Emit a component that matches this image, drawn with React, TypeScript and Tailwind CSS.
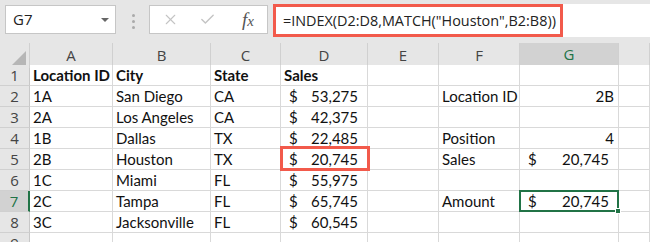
import { X, Check } from "lucide-react";

type Cell = { t?: string; bold?: boolean; right?: boolean; money?: string };

const cols = ["A", "B", "C", "D", "E", "F", "G", ""];

const money = (v: string): Cell => ({ money: v });

const rows: Cell[][] = [
  [{ t: "Location ID", bold: true }, { t: "City", bold: true }, { t: "State", bold: true }, { t: "Sales", bold: true }, {}, {}, {}, {}],
  [{ t: "1A" }, { t: "San Diego" }, { t: "CA" }, money("53,275"), {}, { t: "Location ID" }, { t: "2B", right: true }, {}],
  [{ t: "2A" }, { t: "Los Angeles" }, { t: "CA" }, money("42,375"), {}, {}, {}, {}],
  [{ t: "1B" }, { t: "Dallas" }, { t: "TX" }, money("22,485"), {}, { t: "Position" }, { t: "4", right: true }, {}],
  [{ t: "2B" }, { t: "Houston" }, { t: "TX" }, money("20,745"), {}, { t: "Sales" }, money("20,745"), {}],
  [{ t: "1C" }, { t: "Miami" }, { t: "FL" }, money("55,975"), {}, {}, {}, {}],
  [{ t: "2C" }, { t: "Tampa" }, { t: "FL" }, money("65,745"), {}, { t: "Amount" }, money("20,745"), {}],
  [{ t: "3C" }, { t: "Jacksonville" }, { t: "FL" }, money("60,545"), {}, {}, {}, {}],
  [{}, {}, {}, {}, {}, {}, {}, {}],
];

const grid = "grid grid-cols-[30px_83px_98px_70px_87px_71px_81px_99px_1fr]";

function CellView({ c, r, i }: { c: Cell; r: number; i: number }) {
  const redBox = r === 4 && i === 3;
  const selected = r === 6 && i === 6;
  return (
    <div className="relative h-[21px] border-r border-b border-[#d9d9d9] bg-white text-[15px] leading-[20px] text-[#111]">
      {c.money ? (
        <div className="flex justify-between pl-[8px] pr-[9px]">
          <span>$</span>
          <span>{c.money}</span>
        </div>
      ) : c.t ? (
        <div className={`${c.right ? "text-right pr-[4px]" : "pl-[3px]"} ${c.bold ? "font-bold" : ""} whitespace-nowrap`}>{c.t}</div>
      ) : null}
      {redBox && <div className="absolute -left-px -top-[3px] -right-[3px] -bottom-[2px] z-10 border-[3px] border-[#f25a4b]" />}
      {selected && (
        <div className="absolute -left-px -top-px -right-px -bottom-px z-10 border-2 border-[#217346]">
          <div className="absolute -right-[4px] -bottom-[4px] h-[6px] w-[6px] border border-white bg-[#217346]" />
        </div>
      )}
    </div>
  );
}

export default function App() {
  return (
    <div className="h-[242px] w-[650px] overflow-hidden bg-[#e6e6e6] font-['Lato',sans-serif]">
      {/* formula bar */}
      <div className="flex h-[43px] items-start pt-[4px]">
        <div className="ml-[5px] mt-px flex h-[29px] w-[111px] items-center justify-between border border-[#c6c6c6] bg-white pl-[7px] pr-[6px] font-['Open_Sans',sans-serif] text-[15px] text-[#222]">
          <span>G7</span>
          <span className="h-0 w-0 border-x-[4px] border-t-[4px] border-x-transparent border-t-[#666]" />
        </div>
        <div className="ml-[16px] mr-[14px] mt-[10px] flex flex-col gap-[3px]">
          <span className="h-[3px] w-[3px] rounded-full bg-[#aaa]" />
          <span className="h-[3px] w-[3px] rounded-full bg-[#aaa]" />
          <span className="h-[3px] w-[3px] rounded-full bg-[#aaa]" />
        </div>
        <div className="mt-px flex h-[29px] w-[119px] items-center border border-[#c6c6c6] bg-white">
          <X className="ml-[12px] h-[17px] w-[17px] text-[#c4c4c4]" strokeWidth={1.5} />
          <Check className="ml-[20px] h-[17px] w-[17px] text-[#c4c4c4]" strokeWidth={2} />
          <span className="ml-[26px] font-['Liberation_Serif',serif] text-[19px] italic leading-none text-[#555]">
            f<span className="text-[15px]">x</span>
          </span>
        </div>
        <div className="ml-[5px] flex h-[33px] flex-1 items-center bg-white">
          <div className="flex h-[33px] w-[290px] items-center border-[3px] border-[#f25a4b] pl-[7px] font-['Open_Sans',sans-serif] text-[14.4px] text-[#222]">
            =INDEX(D2:D8,MATCH("Houston",B2:B8))
          </div>
        </div>
      </div>
      {/* column headers */}
      <div className={`${grid} h-[22px] font-['Open_Sans',sans-serif] text-[15px] text-[#444]`}>
        <div className="relative border-r border-[#d0d0d0] bg-[#e6e6e6]">
          <div className="absolute bottom-[3px] right-[3px] h-0 w-0 border-b-[14px] border-l-[14px] border-b-[#b6b6b6] border-l-transparent" />
        </div>
        {cols.map((c, i) => (
          <div
            key={i}
            className={`flex items-center justify-center border-r border-[#d0d0d0] ${c === "G" ? "border-b-2 border-b-[#217346] bg-[#d2d2d2] text-[#217346]" : "bg-[#e6e6e6]"}`}
          >
            {c}
          </div>
        ))}
      </div>
      {/* rows */}
      {rows.map((row, r) => (
        <div key={r} className={grid}>
          <div
            className={`flex h-[21px] items-center justify-center border-b border-[#d0d0d0] font-['Open_Sans',sans-serif] text-[15px] text-[#444] ${r === 6 ? "border-r-2 border-r-[#217346] bg-[#d2d2d2] text-[#217346]" : "border-r border-r-[#c8c8c8] bg-[#e6e6e6]"}`}
          >
            {r + 1}
          </div>
          {row.map((c, i) => (
            <CellView key={i} c={c} r={r} i={i} />
          ))}
        </div>
      ))}
    </div>
  );
}
